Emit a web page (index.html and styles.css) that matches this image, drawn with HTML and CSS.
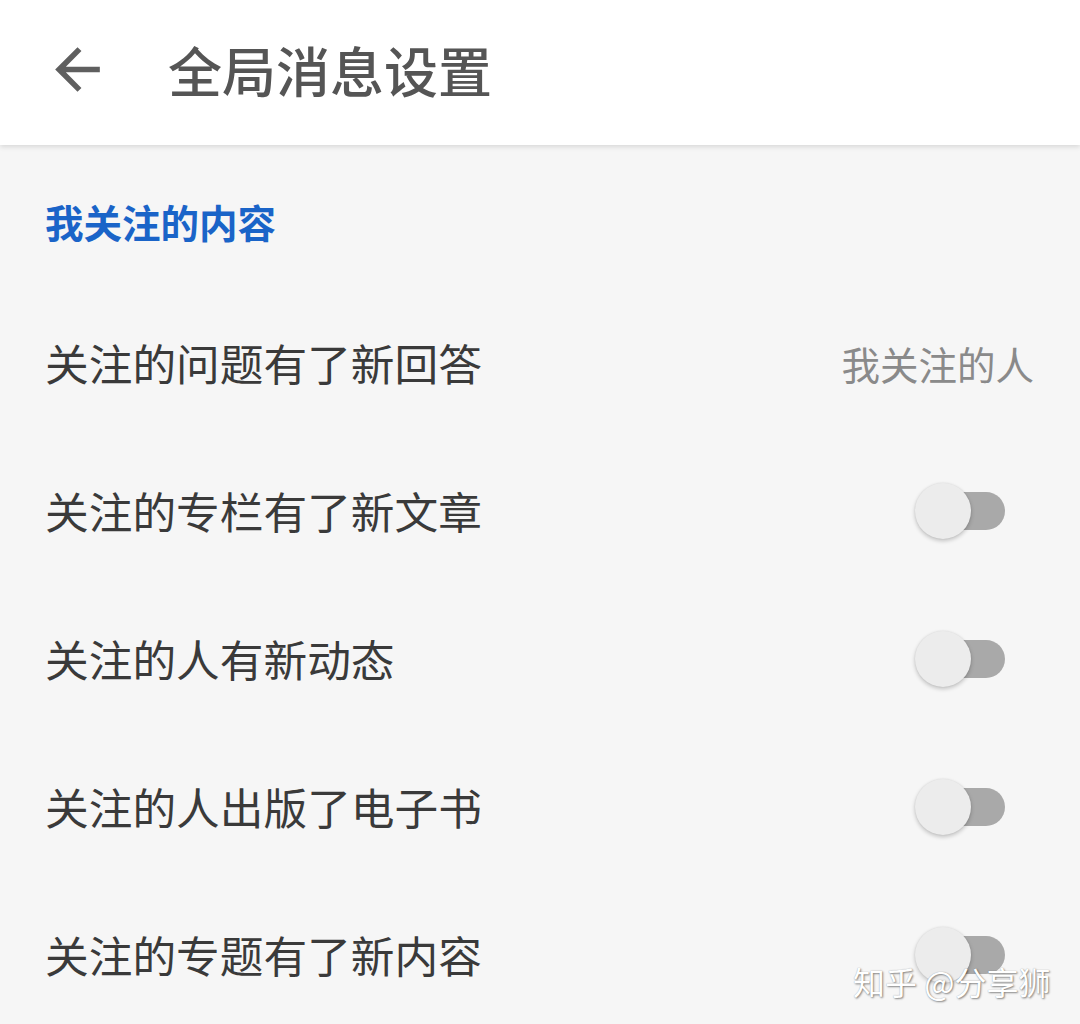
FILE: index.html
```html
<!DOCTYPE html>
<html lang="zh-CN">
<head>
  <meta charset="UTF-8" />
  <meta name="viewport" content="width=device-width, initial-scale=1.0"/>
  <title>全局消息设置</title>
  <link rel="stylesheet" href="styles.css">
</head>
<body>
  <header class="topbar">
    <svg class="back" viewBox="0 0 24 24" width="67" height="67">
      <path d="M20 11H7.83l5.59-5.59L12 4l-8 8 8 8 1.41-1.41L7.83 13H20v-2z" fill="#5f5f5f"/>
    </svg>
    <h1>全局消息设置</h1>
  </header>

  <main class="settings">
    <div class="section-title">我关注的内容</div>

    <div class="row">
      <span class="label">关注的问题有了新回答</span>
      <span class="value">我关注的人</span>
    </div>
    <div class="row">
      <span class="label">关注的专栏有了新文章</span>
      <span class="switch"><span class="track"></span><span class="thumb"></span></span>
    </div>
    <div class="row">
      <span class="label">关注的人有新动态</span>
      <span class="switch"><span class="track"></span><span class="thumb"></span></span>
    </div>
    <div class="row">
      <span class="label">关注的人出版了电子书</span>
      <span class="switch"><span class="track"></span><span class="thumb"></span></span>
    </div>
    <div class="row">
      <span class="label">关注的专题有了新内容</span>
      <span class="switch"><span class="track"></span><span class="thumb"></span></span>
    </div>
  </main>

  <div class="watermark">知乎 @分享狮</div>
</body>
</html>
```

FILE: styles.css
```css
body {
  margin: 0;
  padding: 0;
  width: 1080px;
  height: 1024px;
  overflow: hidden;
  background: #f6f6f6;
  font-family: "Noto Sans CJK SC", "Noto Sans", sans-serif;
  position: relative;
}
.topbar {
  height: 145px;
  background: #fff;
  display: flex;
  align-items: center;
  padding-left: 44px;
  box-shadow: 0 2px 5px rgba(0,0,0,0.12);
  position: relative;
  z-index: 1;
}
.back {
  display: block;
  margin-top: -6px;
}
.topbar h1 {
  margin: -6px 0 0 57px;
  font-size: 54px;
  font-weight: 500;
  color: #555;
  line-height: 1;
}
.settings {
  display: flex;
  flex-direction: column;
}
.section-title {
  margin-top: 46px;
  height: 60px;
  line-height: 60px;
  padding-left: 45px;
  font-size: 38.5px;
  font-weight: 700;
  color: #1a64c8;
  margin-bottom: 38px;
}
.row {
  height: 148px;
  display: flex;
  align-items: center;
  justify-content: space-between;
  padding: 0 46px 0 45px;
}
.label {
  font-size: 43.7px;
  color: #3a3a3a;
  line-height: 1;
}
.value {
  font-size: 38.5px;
  color: #8a8a8a;
  line-height: 1;
}
.switch {
  position: relative;
  width: 90px;
  height: 56px;
  margin-right: 29px;
}
.track {
  position: absolute;
  left: 18px;
  right: 0;
  top: 9px;
  height: 38px;
  border-radius: 19px;
  background: #a9a9a9;
}
.thumb {
  position: absolute;
  left: 0;
  top: 0;
  width: 56px;
  height: 56px;
  border-radius: 50%;
  background: #ececec;
  box-shadow: 0 2px 4px rgba(0,0,0,0.22), 0 0 2px rgba(0,0,0,0.08);
}
.watermark {
  position: absolute;
  left: 853px;
  top: 956px;
  font-size: 32px;
  color: #fff;
  line-height: 50px;
  text-shadow: 1px 1px 2px rgba(0,0,0,0.45), 0 0 1px rgba(0,0,0,0.3);
  z-index: 2;
}
```
